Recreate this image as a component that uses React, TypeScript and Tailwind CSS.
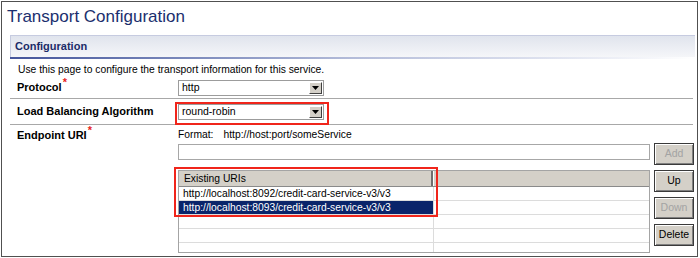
import React from "react";

const font = { fontFamily: '"Liberation Sans", Arial, sans-serif' };

function RedMark({ className }: { className: string }) {
  return <div className={`pointer-events-none absolute border-2 border-[#f0251b] ${className}`} />;
}

function Select({ value }: { value: string }) {
  return (
    <div className="flex h-[16px] w-[146px] items-center border border-[#9c9c9c] bg-white">
      <span className="flex-1 pl-[3px] text-[10.5px] leading-none text-black">{value}</span>
      <span className="mr-[1px] flex h-[12px] w-[13px] items-center justify-center border border-t-white border-l-white border-r-[#404040] border-b-[#404040] bg-[#d4d0c8]">
        <svg width="7" height="4" viewBox="0 0 7 4">
          <path d="M0 0h7L3.5 4z" fill="#000" />
        </svg>
      </span>
    </div>
  );
}

function WinButton({ label, disabled }: { label: string; disabled?: boolean }) {
  return (
    <button
      className={`flex h-[22px] w-[40px] items-center justify-center border border-[#3a3a3a] bg-[#d4d0c8] text-[10.5px] shadow-[inset_1px_1px_0_#fff,inset_-1px_-1px_0_#808080] ${
        disabled ? "text-[#a3a3a3]" : "text-black"
      }`}
    >
      {label}
    </button>
  );
}

function Required() {
  return <sup className="ml-[1px] text-[11px] font-bold text-[#e8251b]">*</sup>;
}

const uris = [
  "http://localhost:8092/credit-card-service-v3/v3",
  "http://localhost:8093/credit-card-service-v3/v3",
];

export default function App() {
  return (
    <div style={font} className="m-[1px] h-[256px] w-[697px] border border-[#505050] bg-white text-black">
      <h1 className="pl-[5px] pt-[4px] text-[17px] leading-[22px] text-[#1b2f6e]">
        Transport Configuration
      </h1>

      {/* Section header */}
      <div className="ml-[8px] mr-[2px] mt-[7px]">
        <div className="flex h-[22px] items-center border-t border-l border-[#c6cbe0] bg-gradient-to-b from-[#e0e4ed] to-[#f5f6f9] pl-[4px] text-[11px] font-bold text-[#1c2c68]">
          Configuration
        </div>
        <div className="h-[2px] bg-gradient-to-r from-[#45559b] via-[#b4bcd9] to-white" />
      </div>

      <div className="ml-[8px] mr-[4px]">
        <p className="pl-[8px] pt-[4px] text-[10.3px] leading-[14px]">
          Use this page to configure the transport information for this service.
        </p>

        {/* Protocol */}
        <div className="grid h-[22px] grid-cols-[168px_1fr] items-center border-b border-[#a8a8a8]">
          <span className="pl-[7px] text-[11px] font-bold">
            Protocol
            <Required />
          </span>
          <Select value="http" />
        </div>

        {/* Load balancing */}
        <div className="grid h-[26px] grid-cols-[168px_1fr] items-center border-b border-[#a8a8a8]">
          <span className="pl-[7px] text-[11px] font-bold">Load Balancing Algorithm</span>
          <div className="relative w-fit">
            <Select value="round-robin" />
            <RedMark className="-left-[3px] -top-[2px] -right-[5px] -bottom-[5px]" />
          </div>
        </div>

        {/* Endpoint URI */}
        <div className="grid grid-cols-[168px_1fr] pt-[3px]">
          <span className="pl-[7px] text-[11px] font-bold leading-[14px]">
            Endpoint URI
            <Required />
          </span>
          <div>
            <div className="flex h-[14px] items-center text-[10.3px]">
              <span>Format:</span>
              <span className="ml-[10px]">http://host:port/someService</span>
            </div>
            <div className="mt-[2px] flex gap-[4px]">
              <div className="h-[16px] w-[472px] border border-[#a7a7a7] bg-white" />
              <div className="-mt-[1px]">
                <WinButton label="Add" disabled />
              </div>
            </div>
            <div className="mt-[5px] flex gap-[4px]">
              <div className="relative">
                <div className="h-[83px] w-[472px] overflow-hidden border border-[#a4a4a4] bg-white text-[10.3px]">
                  <div className="flex h-[16px] border-b border-[#8a8a8a] bg-[#d4d0c8]">
                    <div className="flex w-[254px] items-center border-r-2 border-r-[#6e6e6e] pl-[5px]">
                      Existing URIs
                    </div>
                    <div className="flex-1 border-l border-white" />
                  </div>
                  {[0, 1, 2, 3, 4].map((i) => (
                    <div key={i} className="flex h-[14px] border-b border-[#dcdcdc]">
                      <div
                        className={`flex w-[255px] items-center border-r border-[#dcdcdc] pl-[4px] ${
                          i === 1 ? "bg-[#0a246a] text-white" : ""
                        }`}
                      >
                        {uris[i] ?? ""}
                      </div>
                      <div className="flex-1" />
                    </div>
                  ))}
                </div>
                <RedMark className="-left-[4px] -top-[3px] h-[50px] w-[264px]" />
              </div>
              <div className="flex flex-col gap-[5px]">
                <WinButton label="Up" />
                <WinButton label="Down" disabled />
                <WinButton label="Delete" />
              </div>
            </div>
          </div>
        </div>
      </div>
    </div>
  );
}
